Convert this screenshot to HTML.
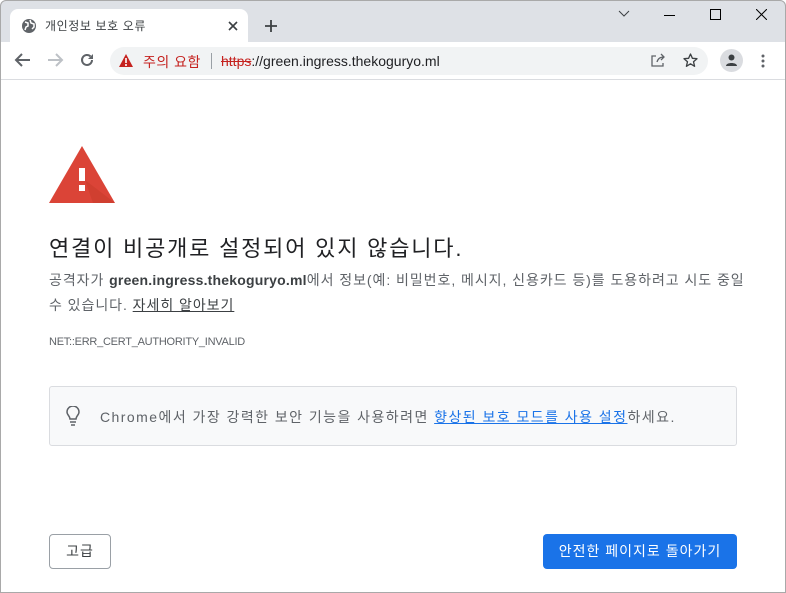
<!DOCTYPE html>
<html><head><meta charset="utf-8"><style>
*{margin:0;padding:0;box-sizing:border-box}
body{width:786px;height:593px;overflow:hidden;background:#fff;font-family:"Liberation Sans","Noto Sans CJK KR",sans-serif;position:relative}
.win{position:absolute;inset:0;border:1px solid #a9a9a9;border-radius:6px 6px 0 0}
.tabbar{position:absolute;left:0;top:0;width:786px;height:42px;background:#dee1e6;border-radius:6px 6px 0 0}
.tab{position:absolute;left:10px;top:9px;width:238px;height:34px;background:#fff;border-radius:8px 8px 0 0}
.toolbar{position:absolute;left:0;top:42px;width:786px;height:38px;background:#fff;border-bottom:1px solid #dadce0}
.omni{position:absolute;left:110px;top:47px;width:598px;height:28px;background:#f1f3f4;border-radius:14px}
.abs{position:absolute}
</style></head><body>
<div class="tabbar"></div>
<div class="tab"></div>
<svg class="abs" style="left:21px;top:18px" width="16" height="16" viewBox="0 0 16 16"><circle cx="8" cy="8" r="7" fill="#5f6368"/><path d="M4 4l3 1 0 3-2 1-1 3M9 2l1 3 3 1 0 3-2 2" stroke="#fff" stroke-width="1.5" fill="none"/></svg>
<div class="abs" style="left:45px;top:17px;font-size:12px;color:#3c4043;letter-spacing:0.6px">개인정보 보호 오류</div>
<svg class="abs" style="left:228px;top:21px" width="10" height="10"><path d="M1 1l8 8M9 1l-8 8" stroke="#3c4043" stroke-width="1.6"/></svg>
<svg class="abs" style="left:264px;top:19px" width="14" height="14"><path d="M7 1v12M1 7h12" stroke="#3c4043" stroke-width="1.8"/></svg>
<svg class="abs" style="left:618px;top:10px" width="12" height="8"><path d="M1 1l5 5 5-5" stroke="#3c4043" fill="none"/></svg>
<div class="abs" style="left:664px;top:15px;width:11px;height:1px;background:#000"></div>
<div class="abs" style="left:710px;top:9px;width:11px;height:11px;border:1px solid #000"></div>
<svg class="abs" style="left:756px;top:9px" width="11" height="11"><path d="M0 0l11 11M11 0l-11 11" stroke="#000"/></svg>
<div class="toolbar"></div>
<svg class="abs" style="left:14px;top:52px" width="18" height="16"><path d="M16 8H3M8 2L2 8l6 6" stroke="#5f6368" stroke-width="2" fill="none"/></svg>
<svg class="abs" style="left:46px;top:52px" width="18" height="16"><path d="M2 8h13M10 2l6 6-6 6" stroke="#bdc1c6" stroke-width="2" fill="none"/></svg>
<svg class="abs" style="left:79px;top:52px" width="16" height="16"><path d="M13 8a5 5 0 1 1-1.5-3.6" stroke="#5f6368" stroke-width="2" fill="none"/><path d="M14 2v5h-5z" fill="#5f6368"/></svg>
<div class="omni"></div>
<svg class="abs" style="left:119px;top:54px" width="14" height="13"><path d="M7 0L14 13H0z" fill="#c5221f"/><path d="M7 4v5M7 10v2" stroke="#fff" stroke-width="1.6"/></svg>
<div class="abs" style="left:143px;top:52px;font-size:14px;color:#c5221f;letter-spacing:0.5px">주의 요함</div>
<div class="abs" style="left:211px;top:53px;width:1px;height:16px;background:#9aa0a6"></div>
<div class="abs" style="left:221px;top:53px;font-size:14px;color:#202124"><span style="color:#c5221f;text-decoration:line-through">https</span>://green.ingress.thekoguryo.ml</div>
<svg class="abs" style="left:651px;top:53px" width="15" height="14"><path d="M5 3H1v10h11v-3M6 9c1-4 4-5 7-5M10 1l3 3-3 3" stroke="#5f6368" stroke-width="1.3" fill="none"/></svg>
<svg class="abs" style="left:683px;top:53px" width="15" height="15" viewBox="0 0 15 15"><path d="M7.5 1l1.9 4.3 4.6.4-3.5 3 1.1 4.6-4.1-2.5-4.1 2.5 1.1-4.6-3.5-3 4.6-.4z" stroke="#3c4043" stroke-width="1.3" fill="none" stroke-linejoin="round"/></svg>
<div class="abs" style="left:720px;top:49px;width:23px;height:23px;border-radius:50%;background:#dadce0"></div>
<svg class="abs" style="left:724px;top:53px" width="15" height="15"><circle cx="7.5" cy="4.5" r="3" fill="#3c4043"/><path d="M2 13c0-4 11-4 11 0z" fill="#3c4043"/></svg>
<svg class="abs" style="left:761px;top:54px" width="4" height="14"><circle cx="2" cy="2" r="1.5" fill="#5f6368"/><circle cx="2" cy="7" r="1.5" fill="#5f6368"/><circle cx="2" cy="12" r="1.5" fill="#5f6368"/></svg>

<svg class="abs" style="left:49px;top:146px" width="66" height="57" viewBox="0 0 66 57"><path d="M33 0L66 57H0z" fill="#db4437"/><path d="M36 34L66 57H44z" fill="#c53929" opacity=".5"/><rect x="30" y="22" width="6" height="13" fill="#fff"/><rect x="30" y="39" width="6" height="6" fill="#fff"/></svg>
<div class="abs" style="left:49px;top:231px;font-size:22px;color:#202124;letter-spacing:1.8px;white-space:nowrap">연결이 비공개로 설정되어 있지 않습니다.</div>
<div class="abs" style="left:49px;top:268px;width:700px;font-size:14px;line-height:25px;color:#5f6368;letter-spacing:0.95px">공격자가 <b style="color:#3c4043;letter-spacing:0.2px">green.ingress.thekoguryo.ml</b>에서 정보(예: 비밀번호, 메시지, 신용카드 등)를 도용하려고 시도 중일 수 있습니다. <u style="color:#3c4043">자세히 알아보기</u></div>
<div class="abs" style="left:49px;top:336px;font-size:11px;color:#5f6368;letter-spacing:-0.25px">NET::ERR_CERT_AUTHORITY_INVALID</div>
<div class="abs" style="left:49px;top:386px;width:688px;height:60px;background:#f8f9fa;border:1px solid #dadce0;border-radius:3px"></div>
<svg class="abs" style="left:66px;top:406px" width="14" height="20"><path d="M4 13c0-3-3-4-3-7a6 6 0 0 1 12 0c0 3-3 4-3 7z M4 16h6M5 19h4" stroke="#5f6368" stroke-width="1.5" fill="none"/></svg>
<div class="abs" style="left:100px;top:407px;font-size:14px;color:#5f6368;letter-spacing:1.45px;white-space:nowrap">Chrome에서 가장 강력한 보안 기능을 사용하려면 <u style="color:#1a73e8">향상된 보호 모드를 사용 설정</u>하세요.</div>
<div class="abs" style="left:49px;top:534px;width:62px;height:35px;border:1px solid #9aa0a6;border-radius:4px;font-size:14px;color:#3c4043;text-align:center;line-height:33px;letter-spacing:1px">고급</div>
<div class="abs" style="left:543px;top:534px;width:194px;height:35px;background:#1a73e8;border-radius:4px;font-size:14px;color:#fff;text-align:center;line-height:35px;letter-spacing:1px;white-space:nowrap">안전한 페이지로 돌아가기</div>
<div class="win"></div>
</body></html>
